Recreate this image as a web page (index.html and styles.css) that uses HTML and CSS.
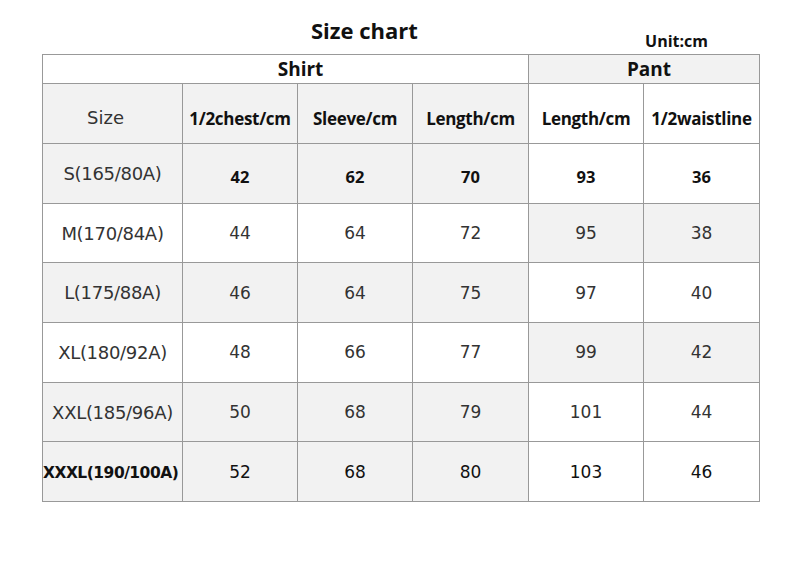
FILE: index.html
```html
<!DOCTYPE html>
<html>
<head>
<meta charset="utf-8">
<link rel="stylesheet" href="styles.css">
</head>
<body>
<div class="page">
  <div class="head">
    <div class="title">Size chart</div>
    <div class="unit">Unit:cm</div>
  </div>
  <table class="chart">
    <colgroup>
      <col class="c1"><col class="c2"><col class="c3"><col class="c4"><col class="c5"><col class="c6">
    </colgroup>
    <tr class="r-group">
      <th colspan="4" class="bold-h shirt">Shirt</th>
      <th colspan="2" class="bold-h pant g">Pant</th>
    </tr>
    <tr class="r-h">
      <td class="g size-h">Size</td>
      <td class="g hb">1/2chest/cm</td>
      <td class="g hb">Sleeve/cm</td>
      <td class="g hb">Length/cm</td>
      <td class="hb">Length/cm</td>
      <td class="hb">1/2waistline</td>
    </tr>
    <tr class="r">
      <td class="g lbl">S(165/80A)</td>
      <td class="g vb">42</td>
      <td class="g vb">62</td>
      <td class="g vb">70</td>
      <td class="vb">93</td>
      <td class="vb">36</td>
    </tr>
    <tr class="r">
      <td class="lbl">M(170/84A)</td>
      <td class="v">44</td>
      <td class="v">64</td>
      <td class="v">72</td>
      <td class="g v">95</td>
      <td class="g v">38</td>
    </tr>
    <tr class="r">
      <td class="g lbl">L(175/88A)</td>
      <td class="g v">46</td>
      <td class="g v">64</td>
      <td class="g v">75</td>
      <td class="v">97</td>
      <td class="v">40</td>
    </tr>
    <tr class="r">
      <td class="lbl">XL(180/92A)</td>
      <td class="v">48</td>
      <td class="v">66</td>
      <td class="v">77</td>
      <td class="g v">99</td>
      <td class="g v">42</td>
    </tr>
    <tr class="r">
      <td class="g lbl">XXL(185/96A)</td>
      <td class="g v">50</td>
      <td class="g v">68</td>
      <td class="g v">79</td>
      <td class="v">101</td>
      <td class="v">44</td>
    </tr>
    <tr class="r">
      <td class="g lbl-b">XXXL(190/100A)</td>
      <td class="g v dark">52</td>
      <td class="g v dark">68</td>
      <td class="g v dark">80</td>
      <td class="v dark">103</td>
      <td class="v dark">46</td>
    </tr>
  </table>
</div>
</body>
</html>
```

FILE: styles.css
```css
html, body {
  margin: 0;
  padding: 0;
  background: #ffffff;
}

.page {
  padding-left: 42px;
  width: 718px;
}

.head {
  display: flex;
  height: 54px;
  font-family: "Open Sans", "Noto Sans", sans-serif;
  font-weight: 700;
  color: #111;
}

.title {
  margin-left: 269px;
  padding-top: 19px;
  font-size: 22px;
  line-height: 1;
}

.unit {
  margin-left: auto;
  margin-right: 52px;
  padding-top: 33px;
  font-size: 16px;
  line-height: 1;
}

.chart {
  border-collapse: collapse;
  table-layout: fixed;
  width: 718px;
}

.c1 { width: 140px; }
.c2 { width: 115px; }
.c3 { width: 115px; }
.c4 { width: 116px; }
.c5 { width: 115px; }
.c6 { width: 116px; }

.chart th,
.chart td {
  border: 1px solid #999;
  padding: 0;
  text-align: center;
  vertical-align: middle;
  background: #ffffff;
  white-space: nowrap;
}

.chart .g {
  background: #f2f2f2;
}

.r-group { height: 29px; }
.r-h { height: 60px; }
.r { height: 59.7px; }

.bold-h {
  font-family: "Open Sans", "Noto Sans", sans-serif;
  font-weight: 700;
  font-size: 19px;
  color: #111;
}

.chart .shirt {
  padding-left: 30px;
}

.chart .pant {
  padding-left: 10px;
}

.chart .hb {
  font-family: "Open Sans", "Noto Sans", sans-serif;
  font-weight: 700;
  font-size: 17px;
  letter-spacing: -0.3px;
  color: #111;
  padding-top: 9px;
}

.chart .size-h {
  font-family: "DejaVu Sans", sans-serif;
  font-size: 18px;
  color: #333;
  padding-top: 8px;
  padding-right: 14px;
}

.lbl {
  font-family: "DejaVu Sans", sans-serif;
  font-size: 18px;
  letter-spacing: -0.3px;
  color: #333;
}

.chart .lbl-b {
  font-family: "DejaVu Sans", sans-serif;
  font-weight: 700;
  font-size: 15.5px;
  letter-spacing: -0.5px;
  color: #111;
  padding-top: 3px;
  padding-right: 6px;
  overflow: visible;
}

.v {
  font-family: "DejaVu Sans", sans-serif;
  font-size: 17px;
  color: #333;
}

.chart .vb {
  font-family: "Open Sans", "Noto Sans", sans-serif;
  font-weight: 700;
  font-size: 16.5px;
  color: #111;
  padding-top: 6px;
}

.dark {
  color: #111;
}
```
